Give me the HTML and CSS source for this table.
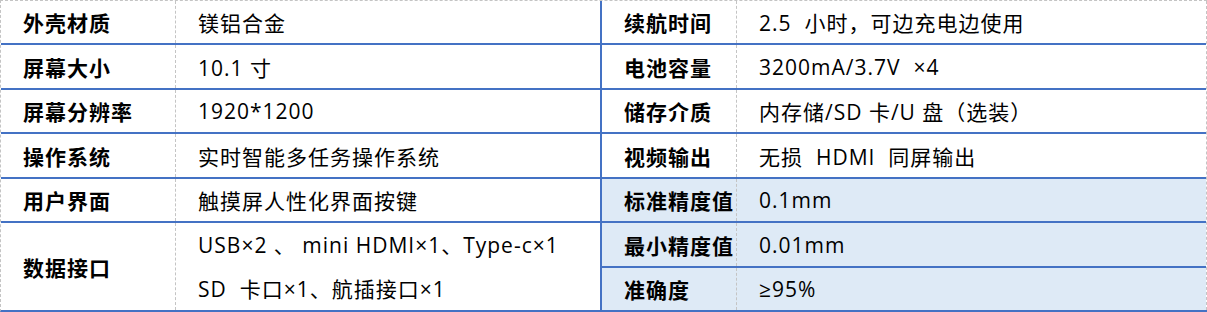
FILE: index.html
```html
<!DOCTYPE html>
<html lang="zh-CN">
<head>
<meta charset="utf-8">
<title>参数表</title>
<link rel="stylesheet" href="styles.css">
</head>
<body>
<div class="spec">
  <div class="half left">
    <div class="row r1"><div class="label">外壳材质</div><div class="value">镁铝合金</div></div>
    <div class="row r2"><div class="label">屏幕大小</div><div class="value">10.1 寸</div></div>
    <div class="row r1"><div class="label">屏幕分辨率</div><div class="value">1920*1200</div></div>
    <div class="row r2"><div class="label">操作系统</div><div class="value">实时智能多任务操作系统</div></div>
    <div class="row r1"><div class="label">用户界面</div><div class="value">触摸屏人性化界面按键</div></div>
    <div class="row rtall last"><div class="label">数据接口</div><div class="value multi"><span>USB×2 、 mini HDMI×1、Type-c×1</span><span>SD&nbsp; 卡口×1、航插接口×1</span></div></div>
  </div>
  <div class="half right">
    <div class="row r1"><div class="label">续航时间</div><div class="value">2.5&nbsp; 小时，可边充电边使用</div></div>
    <div class="row r2"><div class="label">电池容量</div><div class="value">3200mA/3.7V&nbsp; ×4</div></div>
    <div class="row r1"><div class="label">储存介质</div><div class="value">内存储/SD 卡/U 盘（选装）</div></div>
    <div class="row r2"><div class="label">视频输出</div><div class="value">无损&nbsp; HDMI&nbsp; 同屏输出</div></div>
    <div class="row r1 shade"><div class="label">标准精度值</div><div class="value">0.1mm</div></div>
    <div class="row r2 shade"><div class="label">最小精度值</div><div class="value">0.01mm</div></div>
    <div class="row r1 shade last"><div class="label">准确度</div><div class="value">≥95%</div></div>
  </div>
</div>
</body>
</html>
```
FILE: styles.css
```css
html, body {
  margin: 0;
  padding: 0;
  background: #ffffff;
}
body {
  font-family: "Open Sans", "Noto Sans CJK SC", sans-serif;
  font-size: 21px;
  letter-spacing: 1px;
  color: #000;
}
.spec {
  display: flex;
  width: 1207px;
  box-sizing: border-box;
  border-top: 1px dashed #c4c4c4;
  border-left: 1px dashed #c4c4c4;
  border-bottom: 2px solid #4472c4;
}
.half {
  display: flex;
  flex-direction: column;
}
.half.left {
  width: 600px;
  border-right: 2px solid #4472c4;
}
.half.right {
  width: 605px;
  border-right: 1px dashed #c4c4c4;
}
.row {
  display: flex;
  border-bottom: 2px solid #4472c4;
}
.row.last { border-bottom: none; }
.r1 { height: 42px; }
.r2 { height: 43px; }
.rtall { height: 87px; }
.shade { background: #deeaf6; }
.label {
  display: flex;
  align-items: center;
  font-weight: bold;
  padding-left: 22px;
  border-right: 1px dashed #c4c4c4;
  box-sizing: border-box;
  font-family: "Noto Sans CJK SC", sans-serif;
  white-space: nowrap;
}
.left .label { width: 175px; }
.right .label { width: 135px; }
.value {
  display: flex;
  align-items: center;
  padding-left: 22px;
  white-space: nowrap;
}
.value.multi {
  flex-direction: column;
  align-items: flex-start;
  justify-content: center;
  line-height: 44px;
}
```
